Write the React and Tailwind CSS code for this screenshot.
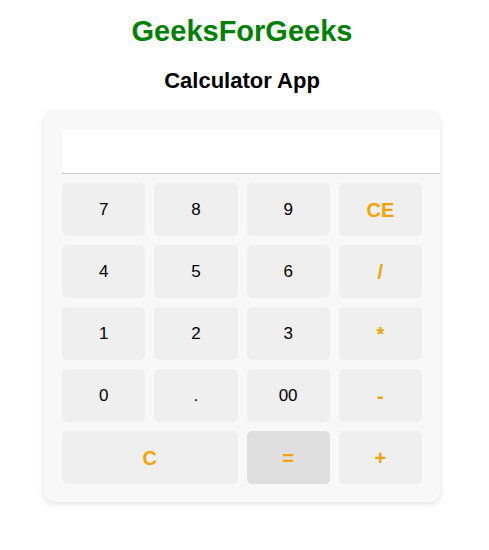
import React, { useState } from "react";

const rows = [
  ["7", "8", "9", "CE"],
  ["4", "5", "6", "/"],
  ["1", "2", "3", "*"],
  ["0", ".", "00", "-"],
];

const ops = ["CE", "/", "*", "-", "+", "=", "C"];

const Key = ({ label, wide, active, onClick }) => {
  const isOp = ops.includes(label);
  return (
    <button
      onClick={() => onClick(label)}
      className={
        (wide ? "col-span-2 " : "") +
        (active ? "bg-[#dfdfdf] " : "bg-[#efefef] ") +
        (isOp
          ? "text-[#f5a300] font-bold text-[20px] "
          : "text-black text-[17px] ") +
        "h-[53px] rounded-[5px] flex items-center justify-center"
      }
    >
      {label}
    </button>
  );
};

export default function App() {
  const [value, setValue] = useState("");

  const press = (k) => {
    if (k === "C") setValue("");
    else if (k === "CE") setValue((v) => v.slice(0, -1));
    else if (k === "=") {
      try {
        // eslint-disable-next-line no-new-func
        setValue(String(Function(`return (${value})`)()));
      } catch (e) {
        setValue("Error");
      }
    } else setValue((v) => v + k);
  };

  return (
    <div
      className="w-[484px] min-h-[550px] bg-white flex flex-col items-center"
      style={{ fontFamily: '"Liberation Sans", Arial, sans-serif' }}
    >
      <h1 className="mt-[15px] text-[29px] font-bold text-[#008000] leading-[33px]">
        GeeksForGeeks
      </h1>
      <h2 className="mt-[20px] text-[22px] font-bold text-black leading-[25px]">
        Calculator App
      </h2>
      <div className="mt-[18px] w-[396px] bg-[#f8f8f8] rounded-[10px] shadow-[0_2px_6px_rgba(0,0,0,0.12)] p-[18px] pr-0">
        <div className="w-[378px] h-[45px] bg-white border-b border-[#cccccc] px-3 flex items-center justify-end text-[20px]">
          {value}
        </div>
        <div className="mt-[9px] w-[360px] grid grid-cols-4 gap-[9px]">
          {rows.flat().map((k) => (
            <Key key={k} label={k} onClick={press} />
          ))}
          <Key label="C" wide onClick={press} />
          <Key label="=" active onClick={press} />
          <Key label="+" onClick={press} />
        </div>
      </div>
    </div>
  );
}
